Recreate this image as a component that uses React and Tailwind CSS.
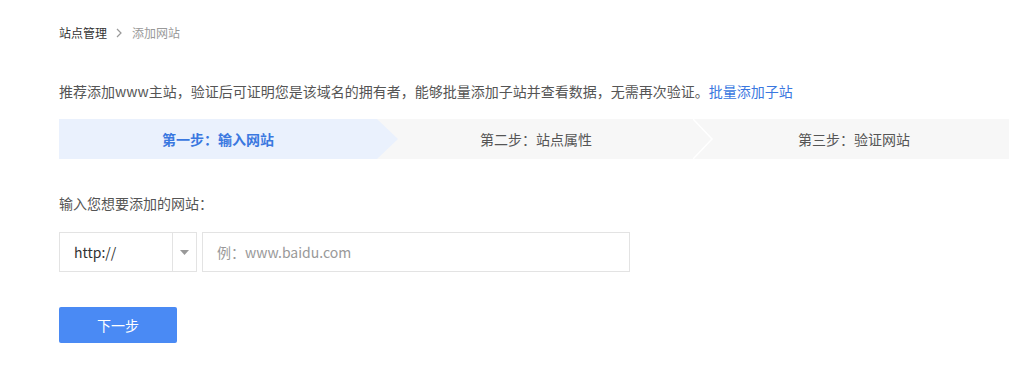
import React, { useState } from "react";

const font = { fontFamily: '"Noto Sans CJK SC", "Noto Sans", sans-serif' };

const Steps = () => {
    return (
        <div className="relative flex h-10 w-[950px] bg-[#f7f7f7] text-[14px]">
            <div className="relative z-10 flex h-10 w-[339px] shrink-0 items-center bg-[#eaf1fd] [clip-path:polygon(0_0,318px_0,339px_50%,318px_100%,0_100%)]">
                <span className="w-[318px] text-center font-bold text-[#3a78e0]">第一步：输入网站</span>
            </div>
            <div className="-ml-[21px] flex w-[318px] shrink-0 items-center justify-center text-[#555]">
                第二步：站点属性
            </div>
            <div className="relative flex flex-1 items-center justify-center text-[#555]">
                {/* faint chevron divider */}
                <svg className="absolute -left-[2px] top-0" width="22" height="40" viewBox="0 0 22 40">
                    <polyline points="0,0 19,20 0,40" fill="none" stroke="#ffffff" strokeWidth="1.5" />
                </svg>
                <span className="pl-[4px]">第三步：验证网站</span>
            </div>
        </div>
    );
};

export default function App() {
    const [site, setSite] = useState("");

    return (
        <div className="h-[376px] w-[1009px] overflow-hidden bg-white pl-[59px] pt-[24px] text-[#333]" style={font}>
            <div className="flex items-center text-[12px] leading-[18px]">
                <span className="text-[#333]">站点管理</span>
                <svg className="mx-[9px]" width="7" height="10" viewBox="0 0 7 10">
                    <polyline points="1,1 5,5 1,9" fill="none" stroke="#999" strokeWidth="1.2" />
                </svg>
                <span className="text-[#999]">添加网站</span>
            </div>

            <p className="mt-[39px] text-[14px] leading-[20px] text-[#555]">
                推荐添加www主站，验证后可证明您是该域名的拥有者，能够批量添加子站并查看数据，无需再次验证。
                <a href="#" className="text-[#3a78e0]">批量添加子站</a>
            </p>

            <div className="mt-[18px]">
                <Steps />
            </div>

            <div className="mt-[34px] text-[14px] leading-[20px] text-[#555]">输入您想要添加的网站：</div>

            <div className="mt-[19px] flex h-10 items-stretch gap-[5px]">
                <div className="flex w-[138px] border border-[#e3e3e3]">
                    <div className="flex flex-1 items-center pl-[14px] text-[14px] text-[#333]">http://</div>
                    <div className="flex w-[24px] items-center justify-center border-l border-[#e3e3e3]">
                        <svg width="9" height="5" viewBox="0 0 9 5">
                            <polygon points="0,0 9,0 4.5,5" fill="#999" />
                        </svg>
                    </div>
                </div>
                <input
                    value={site}
                    onChange={(e) => setSite(e.target.value)}
                    placeholder="例：www.baidu.com"
                    className="w-[428px] border border-[#e3e3e3] pl-[14px] text-[14px] text-[#333] outline-none placeholder:text-[#999]"
                />
            </div>

            <button className="mt-[35px] h-[36px] w-[118px] rounded-[2px] bg-[#4a8af4] text-[14px] text-white">
                下一步
            </button>
        </div>
    );
}
